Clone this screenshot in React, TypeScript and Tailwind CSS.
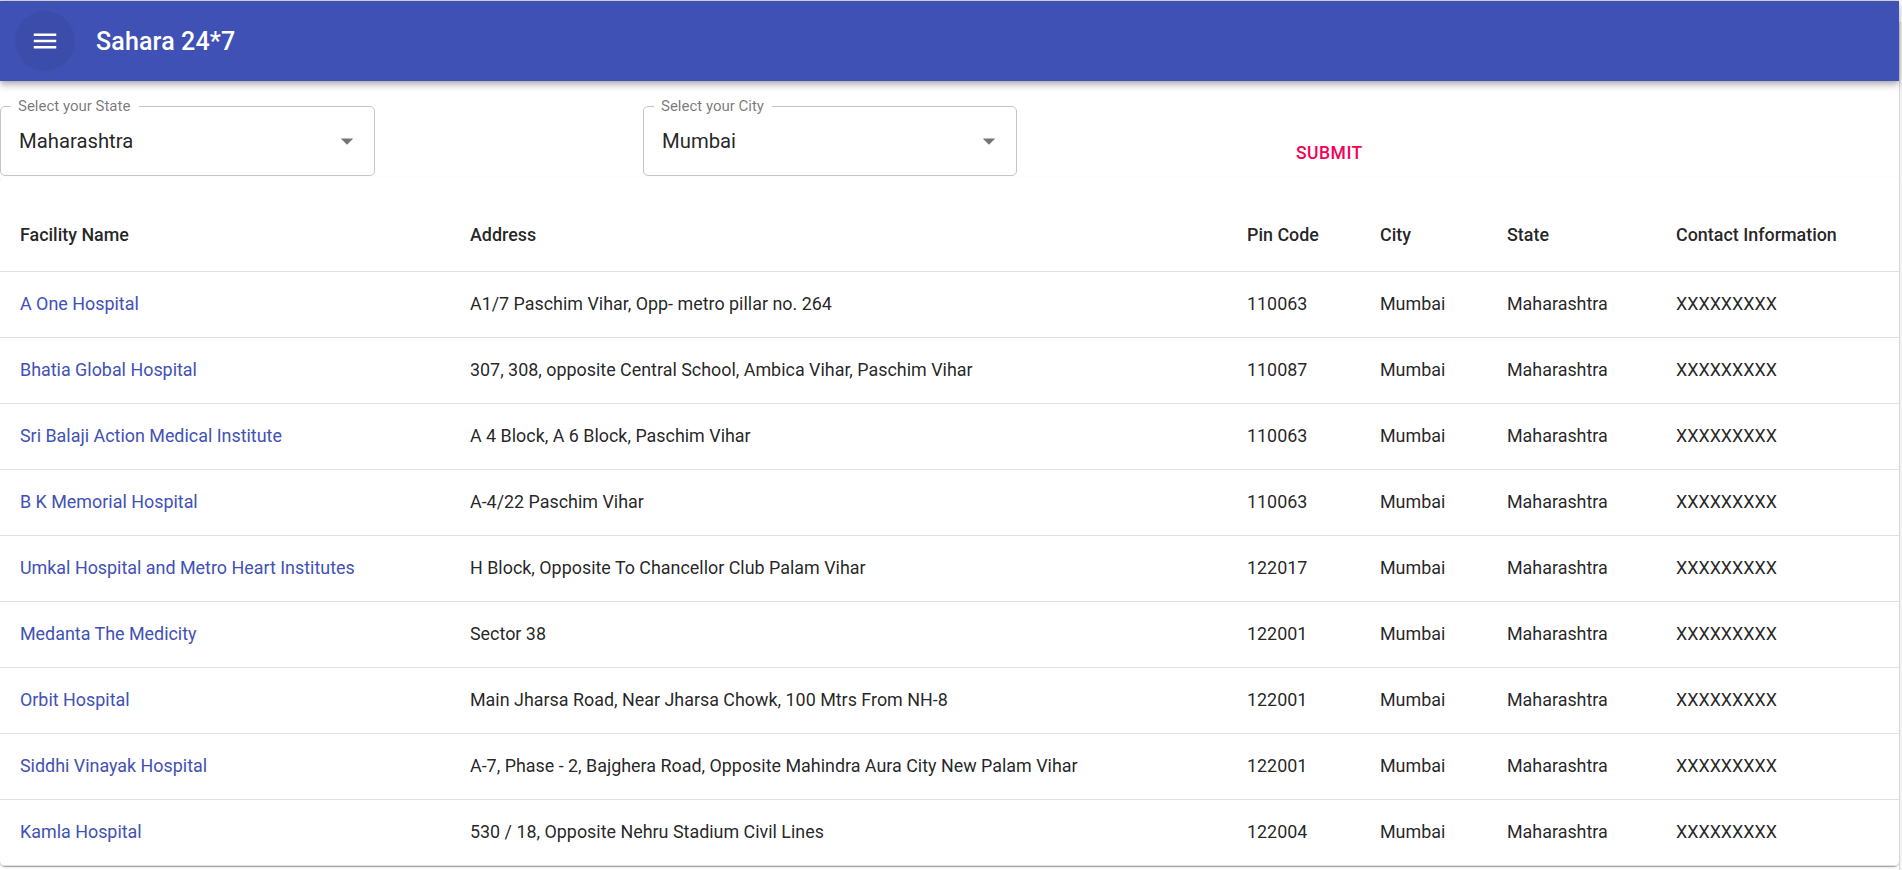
import React from "react";

const rows: [string, string, string][] = [
  ["A One Hospital", "A1/7 Paschim Vihar, Opp- metro pillar no. 264", "110063"],
  ["Bhatia Global Hospital", "307, 308, opposite Central School, Ambica Vihar, Paschim Vihar", "110087"],
  ["Sri Balaji Action Medical Institute", "A 4 Block, A 6 Block, Paschim Vihar", "110063"],
  ["B K Memorial Hospital", "A-4/22 Paschim Vihar", "110063"],
  ["Umkal Hospital and Metro Heart Institutes", "H Block, Opposite To Chancellor Club Palam Vihar", "122017"],
  ["Medanta The Medicity", "Sector 38", "122001"],
  ["Orbit Hospital", "Main Jharsa Road, Near Jharsa Chowk, 100 Mtrs From NH-8", "122001"],
  ["Siddhi Vinayak Hospital", "A-7, Phase - 2, Bajghera Road, Opposite Mahindra Aura City New Palam Vihar", "122001"],
  ["Kamla Hospital", "530 / 18, Opposite Nehru Stadium Civil Lines", "122004"],
];

function Arrow() {
  return (
    <svg width="30" height="30" viewBox="0 0 24 24" className="fill-[rgba(0,0,0,0.54)]">
      <path d="M7 10l5 5 5-5z" />
    </svg>
  );
}

function SelectBox({ label, value, labelWidth }: { label: string; value: string; labelWidth: string }) {
  return (
    <div className="relative h-[70px] w-full">
      <fieldset className="absolute inset-0 m-0 rounded-[5px] border border-[#c4c4c4] px-[10px] pt-0 -top-[5px]">
        <legend className={`${labelWidth} h-[11px] p-0 text-[15px] leading-none invisible`}>
          {label}
        </legend>
      </fieldset>
      <div className="absolute left-[18px] -top-[9px] text-[15px] leading-[18px] text-[rgba(0,0,0,0.54)]">{label}</div>
      <div className="relative flex h-full items-center justify-between pl-[19px] pr-[13px]">
        <span className="text-[20.3px] leading-[24px] text-[rgba(0,0,0,0.87)]">{value}</span>
        <Arrow />
      </div>
    </div>
  );
}

export default function App() {
  const font = { fontFamily: "Roboto, 'Noto Sans', Arial, sans-serif" };
  return (
    <div className="flex h-[870px] w-full overflow-hidden bg-white" style={font}>
      <div className="flex w-[1899px] flex-col">
        <div className="h-[1px] bg-[#dedede]" />
        <header className="relative z-10 flex h-[80px] items-center bg-[#3f51b5] pl-[15px] shadow-[0_2px_5px_-1px_rgba(0,0,0,0.2),0_5px_6px_0_rgba(0,0,0,0.14),0_1px_12px_0_rgba(0,0,0,0.12)]">
          <div className="flex h-[60px] w-[60px] items-center justify-center rounded-full bg-[rgba(0,0,0,0.05)]">
            <svg width="30" height="30" viewBox="0 0 24 24" fill="white">
              <path d="M3 18h18v-2H3v2zm0-5h18v-2H3v2zm0-7v2h18V6H3z" />
            </svg>
          </div>
          <h1 className="ml-[21px] text-[25px] font-medium leading-none tracking-[0.15px] text-white">Sahara 24*7</h1>
        </header>
        <div className="flex items-end pt-[25px]">
          <div className="w-[375px]">
            <SelectBox label="Select your State" value="Maharashtra" labelWidth="w-[128px]" />
          </div>
          <div className="ml-[268px] w-[374px]">
            <SelectBox label="Select your City" value="Mumbai" labelWidth="w-[118px]" />
          </div>
          <button className="ml-[269px] flex h-[45px] items-center px-[10px] text-[17.5px] font-medium uppercase tracking-[0.5px] text-[#f50057]">
            Submit
          </button>
        </div>
        <div className="mt-[1px] rounded-[5px] bg-white pt-[24px] shadow-[0_2px_1px_-1px_rgba(0,0,0,0.2),0_1px_1px_0_rgba(0,0,0,0.14),0_1px_3px_0_rgba(0,0,0,0.12)]">
          <table className="w-full table-fixed border-collapse text-[17.9px] text-[rgba(0,0,0,0.87)]">
            <colgroup>
              <col className="w-[450px]" />
              <col className="w-[777px]" />
              <col className="w-[133px]" />
              <col className="w-[127px]" />
              <col className="w-[169px]" />
              <col />
            </colgroup>
            <thead>
              <tr className="h-[70px] border-b border-[#e0e0e0] text-left font-medium">
                <th className="px-[20px] font-medium">Facility Name</th>
                <th className="px-[20px] font-medium">Address</th>
                <th className="px-[20px] font-medium">Pin Code</th>
                <th className="px-[20px] font-medium">City</th>
                <th className="px-[20px] font-medium">State</th>
                <th className="px-[20px] font-medium">Contact Information</th>
              </tr>
            </thead>
            <tbody>
              {rows.map(([name, addr, pin]) => (
                <tr key={name} className="h-[66px] border-b border-[#e0e0e0]">
                  <td className="px-[20px] text-[#3f51b5]">{name}</td>
                  <td className="px-[20px]">{addr}</td>
                  <td className="px-[20px]">{pin}</td>
                  <td className="px-[20px]">Mumbai</td>
                  <td className="px-[20px]">Maharashtra</td>
                  <td className="px-[20px]">XXXXXXXXX</td>
                </tr>
              ))}
            </tbody>
          </table>
        </div>
      </div>
      <div className="mt-[22px] w-[3px] border-l border-[#d8d8d8] bg-[#f1f1f1]" />
    </div>
  );
}
